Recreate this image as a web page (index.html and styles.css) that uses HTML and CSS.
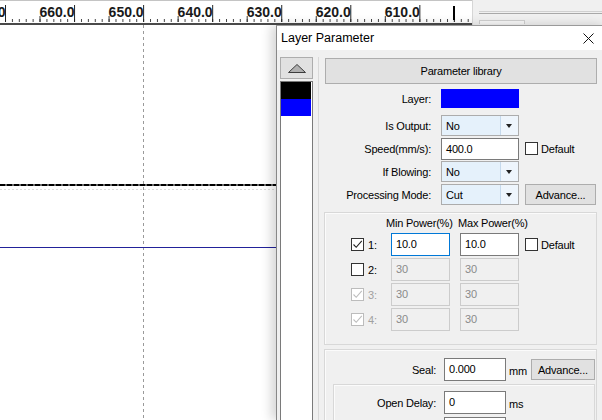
FILE: index.html
```html
<!DOCTYPE html>
<html lang="en">
<head>
    <meta charset="UTF-8">
    <meta name="viewport" content="width=device-width, initial-scale=1.0">
    <title>Layer Parameter</title>
    <link rel="stylesheet" href="styles.css">
</head>
<body>
    <!-- Ruler and toolbar strip -->
    <div class="topbar">
        <svg class="ruler" width="472" height="23" viewBox="0 0 472 23">
            <defs>
                <pattern id="minorTick" x="5" y="0" width="6.906" height="23" patternUnits="userSpaceOnUse">
                    <rect x="0" y="19" width="1" height="3" fill="#444"/>
                </pattern>
                <pattern id="halfTick" x="39.5" y="0" width="69.06" height="23" patternUnits="userSpaceOnUse">
                    <rect x="0" y="16" width="1" height="6" fill="#333"/>
                </pattern>
                <pattern id="majorTick" x="5" y="0" width="69.06" height="23" patternUnits="userSpaceOnUse">
                    <rect x="0" y="5" width="1" height="17" fill="#222"/>
                </pattern>
            </defs>
            <rect x="0" y="0" width="472" height="1" fill="#c4c4c4"/>
            <rect x="0" y="0" width="472" height="23" fill="url(#minorTick)"/>
            <rect x="0" y="0" width="472" height="23" fill="url(#halfTick)"/>
            <rect x="0" y="0" width="472" height="23" fill="url(#majorTick)"/>
            <rect x="453" y="6" width="2" height="14" fill="#000"/>
            <g class="ruler-labels">
                <text x="-29.5" y="17">670.0</text>
                <text x="39.5" y="17">660.0</text>
                <text x="108.6" y="17">650.0</text>
                <text x="177.6" y="17">640.0</text>
                <text x="246.7" y="17">630.0</text>
                <text x="315.7" y="17">620.0</text>
                <text x="384.8" y="17">610.0</text>
            </g>
        </svg>
        <div class="toolbar">
            <div class="tb-line"></div>
            <div class="tb-line dark"></div>
            <div class="tb-tab"></div>
        </div>
    </div>

    <div class="workspace">
        <!-- Drawing canvas -->
        <svg class="canvas" width="276" height="395" viewBox="0 0 276 395">
            <line x1="143.5" y1="0" x2="143.5" y2="395" stroke="#9a9a9a" stroke-dasharray="3 3"/>
            <line x1="0" y1="160" x2="276" y2="160" stroke="#6a6a6a" stroke-width="2"/>
            <line x1="0" y1="160" x2="276" y2="160" stroke="#000" stroke-width="2" stroke-dasharray="5 2"/>
            <line x1="0" y1="164.5" x2="276" y2="164.5" stroke="#dcdcdc" stroke-dasharray="2 2"/>
            <line x1="0" y1="222.5" x2="276" y2="222.5" stroke="#22229a"/>
        </svg>

        <!-- Layer Parameter dialog -->
        <div class="dialog">
            <div class="titlebar">
                <span>Layer Parameter</span>
                <svg class="close" width="11" height="11" viewBox="0 0 11 11">
                    <path d="M0.5 0.5 L10.5 10.5 M10.5 0.5 L0.5 10.5" stroke="#111" stroke-width="1"/>
                </svg>
            </div>

            <div class="dialog-body">
                <div class="layer-side">
                    <button class="up-btn">
                        <svg width="18" height="9" viewBox="0 0 18 9">
                            <polygon points="0.5,8.5 9,0.5 17.5,8.5" fill="#b0b0b0" stroke="#3c3c3c"/>
                        </svg>
                    </button>
                    <div class="layer-list">
                        <div class="swatch swatch-black"></div>
                        <div class="swatch swatch-blue"></div>
                    </div>
                </div>
                <div class="separator"></div>

                <div class="params">
                    <button class="btn lib-btn">Parameter library</button>

                    <div class="row row-layer">
                        <label>Layer:</label>
                        <div class="color-box"></div>
                    </div>
                    <div class="row">
                        <label>Is Output:</label>
                        <div class="combo"><span>No</span><i class="arrow"></i></div>
                    </div>
                    <div class="row">
                        <label>Speed(mm/s):</label>
                        <div class="input">400.0</div>
                        <span class="chk"></span><span class="chk-text">Default</span>
                    </div>
                    <div class="row">
                        <label>If Blowing:</label>
                        <div class="combo"><span>No</span><i class="arrow"></i></div>
                    </div>
                    <div class="row">
                        <label>Processing Mode:</label>
                        <div class="combo"><span>Cut</span><i class="arrow"></i></div>
                        <button class="btn adv-btn">Advance...</button>
                    </div>

                    <!-- Power settings -->
                    <div class="group power-group">
                        <div class="power-head">
                            <span class="head-min">Min Power(%)</span>
                            <span>Max Power(%)</span>
                        </div>
                        <div class="power-row">
                            <span class="chk checked"><svg width="11" height="11" viewBox="0 0 11 11"><path d="M1.5 5.5 L4.2 8.3 L9.8 1.8" fill="none" stroke="#222" stroke-width="1.1"/></svg></span>
                            <span class="idx">1:</span>
                            <div class="input power-input focus">10.0</div>
                            <div class="input power-input max">10.0</div>
                            <span class="chk"></span><span class="chk-text">Default</span>
                        </div>
                        <div class="power-row">
                            <span class="chk"></span>
                            <span class="idx">2:</span>
                            <div class="input power-input disabled">30</div>
                            <div class="input power-input max disabled">30</div>
                        </div>
                        <div class="power-row">
                            <span class="chk checked disabled"><svg width="11" height="11" viewBox="0 0 11 11"><path d="M1.5 5.5 L4.2 8.3 L9.8 1.8" fill="none" stroke="#bdbdbd" stroke-width="1.1"/></svg></span>
                            <span class="idx muted">3:</span>
                            <div class="input power-input disabled">30</div>
                            <div class="input power-input max disabled">30</div>
                        </div>
                        <div class="power-row">
                            <span class="chk checked disabled"><svg width="11" height="11" viewBox="0 0 11 11"><path d="M1.5 5.5 L4.2 8.3 L9.8 1.8" fill="none" stroke="#bdbdbd" stroke-width="1.1"/></svg></span>
                            <span class="idx muted">4:</span>
                            <div class="input power-input disabled">30</div>
                            <div class="input power-input max disabled">30</div>
                        </div>
                    </div>

                    <!-- Seal / delay settings -->
                    <div class="group seal-group">
                        <div class="seal-row">
                            <label class="seal-label">Seal:</label>
                            <div class="input short">0.000</div>
                            <span class="unit">mm</span>
                            <button class="btn seal-btn">Advance...</button>
                        </div>
                        <div class="group inner-group">
                            <div class="seal-row">
                                <label class="delay-label">Open Delay:</label>
                                <div class="input short">0</div>
                                <span class="unit">ms</span>
                            </div>
                            <div class="seal-row">
                                <label class="delay-label"></label>
                                <div class="input short"></div>
                            </div>
                        </div>
                    </div>
                </div>
            </div>
        </div>
    </div>
</body>
</html>
```

FILE: styles.css
```css
body {
    margin: 0;
    width: 602px;
    height: 420px;
    overflow: hidden;
    background-color: #fff;
    font-family: "Liberation Sans", Arial, sans-serif;
    font-size: 11px;
    letter-spacing: -0.2px;
    color: #000;
}
button {
    font-family: inherit;
    font-size: inherit;
    letter-spacing: inherit;
    color: #000;
    padding: 0;
}

/* top strip */
.topbar {
    display: flex;
    height: 25px;
}
.ruler {
    display: block;
    flex: none;
    background-color: #fff;
    border-bottom: 2px solid #4a4a4a;
}
.ruler-labels text {
    font-family: "Liberation Sans", Arial, sans-serif;
    font-size: 14px;
    font-weight: bold;
    letter-spacing: 0;
    fill: #1a1a1a;
}
.toolbar {
    flex: 1;
    background-color: #f0f0f0;
    border-left: 1px solid #d6d6d6;
    padding: 11px 0 0 6px;
}
.tb-line {
    height: 1px;
    background-color: #d0d0d0;
    margin-bottom: 1px;
}
.tb-line.dark {
    background-color: #a8a8a8;
}
.tb-tab {
    width: 44px;
    height: 3px;
    margin-top: 6px;
    border: 1px solid #cfcfcf;
    border-bottom: none;
    background-color: #f7f7f7;
}

/* canvas + dialog */
.workspace {
    display: flex;
    height: 395px;
}
.canvas {
    display: block;
    flex: none;
    background-color: #fff;
}
.dialog {
    flex: none;
    width: 330px;
    height: 394px;
    overflow: hidden;
    background-color: #f0f0f0;
    border-left: 1px solid #888;
    border-top: 1px solid #9a9a9a;
    box-shadow: -5px 0 10px rgba(0, 0, 0, 0.16);
    position: relative;
    z-index: 1;
}
.titlebar {
    height: 24px;
    background-color: #fff;
    display: flex;
    align-items: center;
    padding: 0 13px 0 4px;
    font-size: 12.5px;
    letter-spacing: 0;
}
.close {
    margin-left: auto;
    display: block;
}
.dialog-body {
    display: flex;
    height: 370px;
    padding: 7px 0 0 3px;
}

/* layer list */
.layer-side {
    width: 33px;
    display: flex;
    flex-direction: column;
}
.up-btn {
    height: 22px;
    border: 1px solid #adadad;
    background-color: #e1e1e1;
    display: flex;
    align-items: center;
    justify-content: center;
}
.up-btn svg {
    display: block;
}
.layer-list {
    margin-top: 2px;
    flex: 1;
    background-color: #fff;
    border: 1px solid #7a7a7a;
    padding-right: 1px;
}
.swatch {
    height: 17px;
}
.swatch-black {
    background-color: #000;
}
.swatch-blue {
    background-color: #0000ff;
}
.separator {
    margin-left: 5px;
    width: 1px;
    background-color: #d9d9d9;
}

/* parameters */
.params {
    margin-left: 5px;
    width: 273px;
    padding-top: 1px;
}
.btn {
    border: 1px solid #adadad;
    background-color: #e1e1e1;
}
.lib-btn {
    display: block;
    margin-left: 1px;
    width: 272px;
    height: 26px;
}
.row {
    display: flex;
    align-items: center;
    height: 23px;
}
.row label {
    width: 107px;
    text-align: right;
    margin-right: 10px;
}
.row-layer {
    height: 19px;
    margin: 5px 0 6px;
}
.color-box {
    width: 78px;
    height: 19px;
    background-color: #0000ff;
}
.combo {
    width: 78px;
    height: 21px;
    box-sizing: border-box;
    border: 1px solid #acacac;
    background-color: #e5f1fb;
    display: flex;
    align-items: center;
}
.combo span {
    flex: 1;
    padding-left: 4px;
}
.arrow {
    width: 17px;
    height: 19px;
    border-left: 1px solid #c5d9ec;
    background-color: #eef5fc;
    position: relative;
}
.arrow::after {
    content: "";
    position: absolute;
    left: 5px;
    top: 8px;
    border-left: 3.5px solid transparent;
    border-right: 3.5px solid transparent;
    border-top: 4px solid #222;
}
.input {
    box-sizing: border-box;
    width: 78px;
    height: 22px;
    border: 1px solid #7a7a7a;
    background-color: #fff;
    padding: 3px 0 0 4px;
    line-height: 14px;
}
.chk {
    box-sizing: border-box;
    width: 13px;
    height: 13px;
    border: 1px solid #333;
    background-color: #fff;
    margin-left: 6px;
    flex: none;
}
.chk svg {
    display: block;
}
.chk.disabled {
    border-color: #bcbcbc;
}
.chk-text {
    margin-left: 3px;
}
.adv-btn {
    margin-left: 6px;
    width: 71px;
    height: 21px;
}

/* groups */
.group {
    border: 1px solid #d8d8d8;
    box-shadow: inset 1px 1px 0 #fbfbfb;
}
.power-group {
    margin-top: 6px;
    height: 128px;
    padding: 3px 0 0 26px;
}
.power-head {
    display: flex;
    height: 14px;
    line-height: 14px;
    padding-left: 35px;
    margin-bottom: 3px;
}
.head-min {
    width: 72px;
}
.power-row {
    display: flex;
    align-items: center;
    height: 23px;
    margin-bottom: 2px;
}
.power-row .chk {
    margin-left: 0;
}
.idx {
    width: 23px;
    padding-left: 4px;
}
.idx.muted {
    color: #a0a0a0;
}
.power-input {
    width: 59px;
    height: 23px;
}
.power-input.max {
    margin-left: 10px;
}
.power-input.focus {
    border-color: #0078d7;
}
.power-input.disabled {
    border-color: #cccccc;
    background-color: #f0f0f0;
    color: #8a8a8a;
}
.power-row .chk-text {
    margin-left: 3px;
}
.power-row .power-input.max + .chk {
    margin-left: 6px;
}
.seal-group {
    margin-top: 4px;
    height: 120px;
    padding-top: 8px;
}
.seal-row {
    display: flex;
    align-items: center;
    height: 23px;
    margin-bottom: 3px;
}
.seal-label {
    width: 111px;
    text-align: right;
    margin-right: 8px;
}
.delay-label {
    width: 102px;
    text-align: right;
    margin-right: 8px;
}
.input.short {
    width: 62px;
    height: 23px;
}
.unit {
    margin: 3px 0 0 3px;
}
.seal-btn {
    margin-left: 4px;
    width: 64px;
    height: 21px;
}
.inner-group {
    margin: 2px 1px 0 8px;
    height: 80px;
    padding-top: 6px;
}
```
